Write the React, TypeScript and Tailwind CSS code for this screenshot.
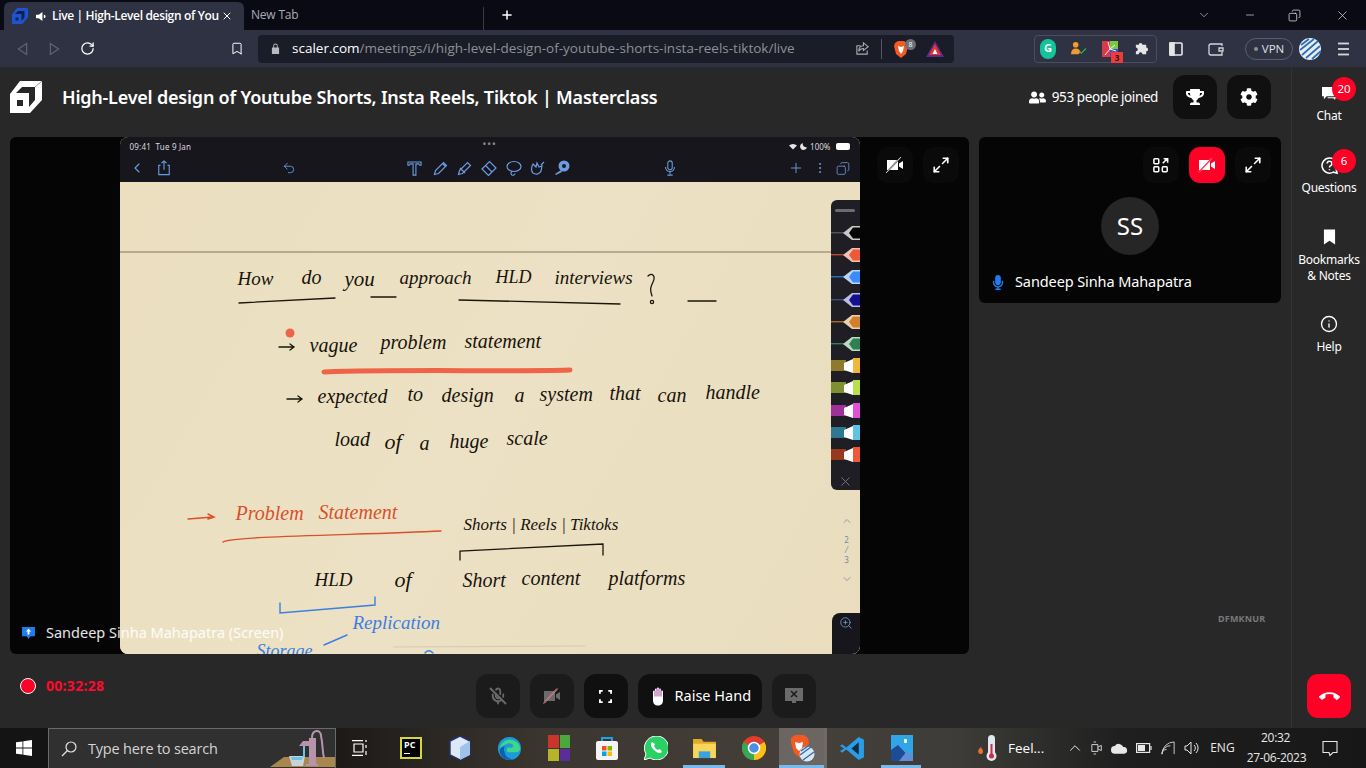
import {
  Bookmark,
  ChevronDown,
  ChevronLeft,
  ChevronUp,
  Copy,
  EllipsisVertical,
  Info,
  Maximize2,
  MicOff,
  Minus,
  Plus,
  RotateCw,
  Undo2,
  X,
  ZoomIn,
} from 'lucide-react'
import { FaCog, FaMicrophone, FaTrophy, FaUserFriends } from 'react-icons/fa'
import { MdCallEnd } from 'react-icons/md'

const sans = "font-['Noto_Sans',sans-serif]"

function VideoOff({ className = 'w-5 h-5', fill = '#fff', line = '#fff' }: { className?: string; fill?: string; line?: string }) {
  return (
    <svg viewBox="0 0 20 20" className={className}>
      <path d="M2 5h11v10H2zM14 8.500l4-2.500v8l-4-2.500z" fill={fill} />
      <path d="M2 17L15 3" stroke={line === '#fff' ? '#333' : '#ff7f92'} strokeWidth="1.600" />
      <path d="M1 18L16 2" stroke={line} strokeWidth="0.800" />
    </svg>
  )
}

function TileBtn({ children, className = 'bg-[#0a0a0a]' }: { children: React.ReactNode; className?: string }) {
  return <div className={`w-9 h-9 rounded-[11px] flex items-center justify-center ${className}`}>{children}</div>
}

function LogoMark({ className = 'w-8 h-8', front = '#fff', hole = '#282828' }: { className?: string; front?: string; hole?: string }) {
  return (
    <svg viewBox="0 0 32 32" className={className}>
      <path d="M0 13L10 0h22v19L20 32H0z" fill={front} />
      <path d="M6 12l6-6h13v13l-6 7V12z" fill={hole} />
      <path d="M7 19h6v6H7z" fill={hole} />
      <path d="M32 0l-7 6" stroke={hole} strokeWidth="0.800" opacity="0.6" />
    </svg>
  )
}

const handwriting = [
  { t: 'How', c: 'left-[118px] top-[87px] w-[40px] text-[19px]' },
  { t: 'do', c: 'left-[182px] top-[85px] w-[26px] text-[20px]' },
  { t: 'you', c: 'left-[225px] top-[87px] w-[32px] text-[21px]' },
  { t: 'approach', c: 'left-[280px] top-[86px] w-[72px] text-[19px]' },
  { t: 'HLD', c: 'left-[376px] top-[86px] w-[38px] text-[18px]' },
  { t: 'interviews', c: 'left-[435px] top-[86px] w-[86px] text-[19px]' },
  { t: 'vague', c: 'left-[190px] top-[153px] w-[50px] text-[20px]' },
  { t: 'problem', c: 'left-[261px] top-[150px] w-[64px] text-[20px]' },
  { t: 'statement', c: 'left-[345px] top-[149px] w-[92px] text-[20px]' },
  { t: 'expected', c: 'left-[198px] top-[204px] w-[72px] text-[20px]' },
  { t: 'to', c: 'left-[288px] top-[202px] w-[16px] text-[20px]' },
  { t: 'design', c: 'left-[322px] top-[203px] w-[56px] text-[20px]' },
  { t: 'a', c: 'left-[395px] top-[203px] w-[10px] text-[20px]' },
  { t: 'system', c: 'left-[420px] top-[202px] w-[58px] text-[20px]' },
  { t: 'that', c: 'left-[490px] top-[201px] w-[34px] text-[20px]' },
  { t: 'can', c: 'left-[538px] top-[203px] w-[36px] text-[20px]' },
  { t: 'handle', c: 'left-[586px] top-[200px] w-[55px] text-[20px]' },
  { t: 'load', c: 'left-[215px] top-[247px] w-[35px] text-[20px]' },
  { t: 'of', c: 'left-[265px] top-[249px] w-[22px] text-[22px]' },
  { t: 'a', c: 'left-[300px] top-[251px] w-[10px] text-[20px]' },
  { t: 'huge', c: 'left-[330px] top-[249px] w-[35px] text-[20px]' },
  { t: 'scale', c: 'left-[387px] top-[246px] w-[41px] text-[20px]' },
  { t: 'Problem', c: 'left-[116px] top-[321px] w-[64px] text-[20px] text-[#d8502c]' },
  { t: 'Statement', c: 'left-[199px] top-[320px] w-[92px] text-[20px] text-[#d8502c]' },
  { t: 'Shorts | Reels | Tiktoks', c: 'left-[344px] top-[334px] w-[156px] text-[17px]' },
  { t: 'HLD', c: 'left-[195px] top-[388px] w-[44px] text-[19px]' },
  { t: 'of', c: 'left-[275px] top-[387px] w-[22px] text-[22px]' },
  { t: 'Short', c: 'left-[343px] top-[388px] w-[48px] text-[20px]' },
  { t: 'content', c: 'left-[402px] top-[386px] w-[64px] text-[20px]' },
  { t: 'platforms', c: 'left-[489px] top-[386px] w-[74px] text-[20px]' },
  { t: 'Replication', c: 'left-[233px] top-[431px] w-[88px] text-[19px] text-[#3b7fdf]' },
  { t: 'Storage', c: 'left-[137px] top-[460px] w-[54px] text-[18px] text-[#3b7fdf]' },
]

const pens = [
  { stem: '#55545a', tip: '#c9c9c9', body: '#050505', hi: false },
  { stem: '#b94a30', tip: '#eec3b4', body: '#ef5a36', hi: false },
  { stem: '#2f6fc0', tip: '#b9d4f5', body: '#3d8bfa', hi: false },
  { stem: '#4a4880', tip: '#bcbde0', body: '#14108c', hi: false },
  { stem: '#a86c2b', tip: '#ecd1b0', body: '#d07f2c', hi: false },
  { stem: '#3c7a5a', tip: '#bcd9c6', body: '#2f8050', hi: false },
  { stem: '#8d7a2c', tip: '#fff', body: '#efb83a', hi: true },
  { stem: '#7e9030', tip: '#fff', body: '#b9df4c', hi: true },
  { stem: '#a0309a', tip: '#fff', body: '#e24fd8', hi: true },
  { stem: '#2f7892', tip: '#fff', body: '#5fc3e6', hi: true },
  { stem: '#96391f', tip: '#fff', body: '#ee5a36', hi: true },
]

function Pen({ stem, tip, body, hi }: { stem: string; tip: string; body: string; hi: boolean }) {
  return (
    <svg viewBox="0 0 29 22.2" className="w-[29px] h-[22.2px] shrink-0">
      {hi ? (
        <>
          <rect x="0" y="5" width="15" height="11" fill={stem} />
          <path d="M13 8l9-4v14l-9-3z" fill={tip} />
          <rect x="22" y="3" width="7" height="15" fill={body} />
        </>
      ) : (
        <>
          <rect x="0" y="10" width="13" height="1.400" fill={stem} />
          <path d="M12 11l9-7h8v14h-8z" fill={tip} />
          <path d="M18 11l4-5.500h7v11h-7z" fill={body} />
        </>
      )}
    </svg>
  )
}

function NotebookApp() {
  return (
    <div className="relative w-[740px] h-full rounded-[8px] overflow-hidden bg-[#ebdfc1] font-['Liberation_Serif',serif]">
      {/* ipad status + toolbar */}
      <div className="h-[45px] bg-[#17161c] text-[#d9d9de] relative">
        <div className={`flex items-center justify-between h-[16px] pl-[10px] pr-[10px] pt-[3px] text-[8px] ${sans}`}>
          <span className="tracking-[0.2px]">09:41 &nbsp;Tue 9 Jan</span>
          <span className="absolute left-[363px] top-0 text-[10px] tracking-[1px] text-[#8b8b90]">•••</span>
          <span className="flex items-center gap-[3px]">
            <svg viewBox="0 0 12 9" className="w-[8px] h-[7px]"><path d="M0 3a9 9 0 0 1 12 0l-6 6z" fill="#e5e5e5" /></svg>
            <svg viewBox="0 0 10 10" className="w-[7px] h-[7px]"><path d="M4 0a5 5 0 1 0 6 6A5 5 0 0 1 4 0z" fill="#e5e5e5" /></svg>
            100%
            <span className="w-[14px] h-[7px] rounded-[2px] bg-white ml-[2px]" />
          </span>
        </div>
        <div className="absolute left-0 right-0 top-[19px] h-[24px] flex items-center text-[#6a9be0]">
          <ChevronLeft className="absolute left-[9px] w-[16px] h-[16px]" strokeWidth={1.6} />
          <svg viewBox="0 0 16 18" className="absolute left-[37px] w-[14px] h-[16px]" fill="none" stroke="currentColor" strokeWidth="1.300"><path d="M4 6H2v10.500h12V6h-2M8 11V1M5 3.500L8 1l3 2.500" /></svg>
          <Undo2 className="absolute left-[162px] w-[14px] h-[14px]" strokeWidth={1.5} />
          <svg viewBox="0 0 16 16" className="absolute left-[287px] w-[15px] h-[15px]" fill="none" stroke="currentColor" strokeWidth="1.200"><path d="M1 1h14v3.500h-1.500L12.500 3H9.500v12h-3V3H3.500L2.500 4.500H1z" /></svg>
          <svg viewBox="0 0 16 16" className="absolute left-[313px] w-[16px] h-[16px]" fill="none" stroke="currentColor" strokeWidth="1.200"><path d="M1.500 14.500l1-4L10.500 2.500l3 3-8 8zM9.500 3.500l3 3" /></svg>
          <svg viewBox="0 0 16 16" className="absolute left-[337px] w-[16px] h-[16px]" fill="none" stroke="currentColor" strokeWidth="1.200"><path d="M1.500 14.500l1-4L10.500 2.500l3 3-8 8zM3 8l5 5" /></svg>
          <svg viewBox="0 0 16 16" className="absolute left-[361px] w-[16px] h-[16px]" fill="none" stroke="currentColor" strokeWidth="1.200"><path d="M1 9l7.500-7.500L15 8l-7.500 7.500zM4.500 5.500L11 12" /></svg>
          <svg viewBox="0 0 16 16" className="absolute left-[386px] w-[16px] h-[16px]" fill="none" stroke="currentColor" strokeWidth="1.200"><ellipse cx="8" cy="6.500" rx="7" ry="5" /><path d="M6 11.500a2 2 0 1 0 3 2" /></svg>
          <svg viewBox="0 0 16 16" className="absolute left-[410px] w-[16px] h-[16px]" fill="none" stroke="currentColor" strokeWidth="1.200"><path d="M3 4c-2 3-2 7 0 9 3 2 7 1 8-2l1-5-3 1-2-4-1 4zM11 5l3-3" /></svg>
          <svg viewBox="0 0 16 16" className="absolute left-[434px] w-[16px] h-[16px]" fill="currentColor"><circle cx="10" cy="6" r="5.500" /><path d="M7 10l-6 4 1 1 6-3z" /><circle cx="10" cy="6" r="2" fill="#17161c" /></svg>
          <svg viewBox="0 0 12 18" className="absolute left-[544px] w-[12px] h-[16px]" fill="none" stroke="currentColor" strokeWidth="1.200"><rect x="3.500" y="1" width="5" height="10" rx="2.500" /><path d="M1 8a5 5 0 0 0 10 0M6 13v3M3 17h6" /></svg>
          <Plus className="absolute left-[668px] w-[16px] h-[16px]" strokeWidth={1.4} />
          <EllipsisVertical className="absolute left-[693px] w-[14px] h-[14px]" strokeWidth={1.6} />
          <Copy className="absolute left-[716px] w-[14px] h-[15px] -scale-x-100" strokeWidth={1.4} />
        </div>
      </div>

      {/* paper */}
      <div className="relative h-[472px] overflow-hidden bg-[linear-gradient(120deg,#ebdfc0,#ece1c4_50%,#e9ddbe)]">
        <div className="absolute left-0 right-0 top-[69px] h-[2px] bg-[#b8aa90]" />
        {handwriting.map((w, i) => (
          <span key={i} className={`absolute italic leading-none whitespace-nowrap ${w.c.includes('text-[#') ? '' : 'text-[#17130c]'} ${w.c}`}>
            {w.t}
          </span>
        ))}
        <svg viewBox="0 0 740 472" className="absolute inset-0 w-[740px] h-[472px]" fill="none" strokeLinecap="round">
          <g stroke="#1a160e" strokeWidth="1.300">
            <path d="M119 121L215 116M251 115H276M339 118L500 122M568 119H596" />
            <path d="M528 94c4-4 8 0 5 6s-3 8-1 14" />
            <circle cx="532" cy="120" r="1.600" />
            <path d="M159 165H174M170 162l4 3-4 3" />
            <path d="M167 217H182M178 214l4 3-4 3" />
            <path d="M340 378L340 369L483 362L483 373" />
          </g>
          <circle cx="170" cy="151" r="4.500" fill="#ef6448" />
          <path d="M204 190C290 187 380 190 450 188" stroke="#ef6448" strokeWidth="5" />
          <g stroke="#d8502c" strokeWidth="1.400">
            <path d="M68 337L93 335M88 332l6 3-6 2" />
            <path d="M103 360C110 354 240 353 321 349" />
          </g>
          <g stroke="#3b7fdf" strokeWidth="1.400">
            <path d="M160 421V431L255 423V415" />
            <path d="M204 463L227 453" />
            <path d="M305 471c2-3 5-3 8 0" />
          </g>
          <path d="M274 465L465 464" stroke="#d6cbb2" strokeWidth="1.200" />
        </svg>

        {/* pen strip */}
        <div className="absolute right-0 top-[18px] w-[29px] h-[290px] rounded-l-[6px] bg-[#1f1e25] flex flex-col items-center overflow-hidden">
          <div className="w-[20px] h-[3px] mt-[9px] mb-[10px] rounded bg-[#6c6b72]" />
          {pens.map((p, i) => (
            <Pen key={i} {...p} />
          ))}
          <X className="w-[15px] h-[15px] mt-[8px] text-[#77767c]" strokeWidth={1.5} />
        </div>

        <div className={`absolute right-[7px] top-[333px] flex flex-col items-center text-[#6f8aa6] text-[8px] leading-[10px] ${sans}`}>
          <ChevronUp className="w-[12px] h-[12px] mb-[8px]" strokeWidth={1.5} />
          <span>2</span>
          <span>⁄</span>
          <span>3</span>
          <ChevronDown className="w-[12px] h-[12px] mt-[8px]" strokeWidth={1.5} />
        </div>

        <div className="absolute right-0 bottom-0 w-[28px] h-[41px] rounded-tl-[8px] bg-[#17161c] flex justify-center pt-[3px]">
          <ZoomIn className="w-[14px] h-[14px] text-[#7ba0cf]" strokeWidth={1.4} />
        </div>
      </div>
    </div>
  )
}

function ChromeBar() {
  return (
    <div className="font-['Open_Sans',sans-serif]">
      <div className="h-[30px] bg-[#0a0a15] flex items-end pl-[4px] text-[12px]">
        <div className="w-[240px] h-[28px] rounded-t-[6px] bg-[#2f3242] flex items-center pl-[8px] pr-[6px] text-white">
          <LogoMark className="w-[16px] h-[16px]" front="#1f54cf" hole="#10204f" />
          <svg viewBox="0 0 12 12" className="w-[11px] h-[11px] ml-[8px]" fill="#fff"><path d="M0 4h3l4-3v10L3 8H0zM8.500 4v4a2 2 0 0 0 0-4z" /></svg>
          <span className="ml-[5px] w-[168px] overflow-hidden whitespace-nowrap font-semibold tracking-[-0.35px]">Live | High-Level design of You</span>
          <X className="w-[12px] h-[12px] ml-auto mr-[5px]" strokeWidth={2} />
        </div>
        <span className="ml-[7px] mb-[6px] text-[#a9abb3] tracking-[-0.2px]">New Tab</span>
        <div className="ml-[185px] w-px h-[23px] bg-[#3a3b42] mb-0" />
        <Plus className="ml-[16px] mb-[8px] w-[14px] h-[14px] text-white" strokeWidth={2.6} />
        <div className="ml-auto flex items-center h-[30px] text-[#d5d5d8]">
          <ChevronDown className="w-[14px] h-[14px] mr-[33px]" strokeWidth={1.1} />
          <Minus className="w-[12px] h-[12px] mr-[32px]" strokeWidth={1.4} />
          <Copy className="w-[13px] h-[13px] mr-[34px] -scale-x-100" strokeWidth={1.5} />
          <X className="w-[15px] h-[15px] mr-[16px]" strokeWidth={1.2} />
        </div>
      </div>
      <div className="h-[37px] bg-[#2f3242] flex items-center text-[#d5d6db]">
        <svg viewBox="0 0 12 14" className="ml-[17px] w-[11px] h-[14px]" fill="none" stroke="#62646f" strokeWidth="1.300"><path d="M10.500 1L1.500 7l9 6z" /></svg>
        <svg viewBox="0 0 12 14" className="ml-[21px] w-[11px] h-[14px]" fill="none" stroke="#62646f" strokeWidth="1.300"><path d="M1.500 1l9 6-9 6z" /></svg>
        <RotateCw className="ml-[20px] w-[15px] h-[15px] text-white" strokeWidth={2} />
        <Bookmark className="ml-[135px] w-[14px] h-[15px] text-white" strokeWidth={1.7} />
        <div className="ml-[14px] w-[696px] h-[28px] rounded-[4px] bg-[#1a1c27] flex items-center">
          <svg viewBox="0 0 10 12" className="ml-[13px] w-[9px] h-[11px]" fill="#b9bac0"><path d="M1 5h8v7H1zM2.500 5V3a2.500 2.500 0 0 1 5 0v2h-1V3a1.500 1.500 0 0 0-3 0v2z" /></svg>
          <span className="ml-[12px] text-[13.500px] text-[#8e9097] whitespace-nowrap">
            <span className="text-white">scaler.com</span>/meetings/i/high-level-design-of-youtube-shorts-insta-reels-tiktok/live
          </span>
          <svg viewBox="0 0 16 16" className="ml-auto w-[15px] h-[15px]" fill="none" stroke="#a9aab0" strokeWidth="1.200"><path d="M13 10v4H2V5h4M9 2l5 4-5 4V8c-3 0-4 1-5 3 0-4 2-6 5-6z" /></svg>
          <div className="ml-[11px] w-px h-[20px] bg-[#55565e]" />
          <div className="relative ml-[11px] w-[16px] h-[18px]">
            <svg viewBox="0 0 16 18" className="w-[16px] h-[18px]"><path d="M2 3l3-2h6l3 2 1 3-2 8-5 4-5-4-2-8z" fill="#f15a22" /><path d="M5 6l3 1 3-1-1 5-2 3-2-3z" fill="#fff" /></svg>
            <span className="absolute -right-[7px] -top-[1px] w-[11px] h-[11px] rounded-full bg-[#6d6e75] text-white text-[7px] leading-[11px] text-center">8</span>
          </div>
          <svg viewBox="0 0 18 18" className="ml-[17px] mr-[10px] w-[18px] h-[18px]"><path d="M9 1l9 16H0z" fill="#5e2a8c" /><path d="M9 4l6 11H3z" fill="#e8352c" /><path d="M9 9l2.500 5h-5z" fill="#fff" /></svg>
        </div>
        <div className="ml-[80px] w-[123px] h-[28px] rounded-[4px] border border-[#4a4d5c] flex items-center">
          <span className="ml-[5px] w-[16px] h-[20px] rounded-full bg-[#15c39a] flex items-center justify-center text-[11px] font-bold text-white">G</span>
          <svg viewBox="0 0 18 16" className="ml-[14px] w-[17px] h-[15px]"><circle cx="6" cy="4" r="3" fill="#f39c2d" /><path d="M1 14c0-4 2-6 5-6s5 2 5 4l-2 2z" fill="#f39c2d" /><path d="M10 11l2 2 5-5" stroke="#34a853" strokeWidth="1.300" fill="none" /></svg>
          <div className="relative ml-[15px] w-[16px] h-[16px] bg-[linear-gradient(90deg,#d93a4a_50%,#4b4fc4_50%)]">
            <span className="absolute right-0 top-0 w-[8px] h-[8px] bg-[#7ac943]" />
            <svg viewBox="0 0 16 16" className="absolute inset-0 w-[16px] h-[16px]" stroke="#fff" strokeWidth="0.900"><path d="M8 8L3 14M8 8L6 1M8 8l5-4M8 8l6 2" /></svg>
            <span className="absolute -right-[5px] -bottom-[6px] w-[12px] h-[11px] bg-[#ee3a3a] text-[#1a1a1a] text-[8px] leading-[11px] text-center font-bold">3</span>
          </div>
          <svg viewBox="0 0 16 16" className="ml-[16px] w-[15px] h-[15px]" fill="#e6e6e8"><path d="M2 4h3a2 2 0 1 1 4 0h4v3a2 2 0 1 1 0 4v3H9a2 2 0 1 0-4 0H2v-3a2 2 0 1 0 0-4z" /></svg>
        </div>
        <svg viewBox="0 0 14 14" className="ml-[12px] w-[14px] h-[14px]" fill="none" stroke="#e6e6e8" strokeWidth="1.600"><rect x="1" y="1" width="12" height="12" rx="1" /><rect x="1" y="1" width="4" height="12" fill="#e6e6e8" /></svg>
        <svg viewBox="0 0 16 14" className="ml-[25px] w-[16px] h-[14px]" fill="none" stroke="#d5d6db" strokeWidth="1.300"><path d="M14 4V2H3a2 2 0 0 0-2 2v7a2 2 0 0 0 2 2h11V10M15 6h-4v3h4z" /></svg>
        <div className="ml-[21px] w-[48px] h-[22px] rounded-full border border-[#5a5d6b] flex items-center justify-center gap-[4px] text-[11.500px] text-[#dfe0e4]">
          <span className="w-[4px] h-[4px] rounded-full bg-[#8d8f99]" />
          VPN
        </div>
        <svg viewBox="0 0 22 22" className="ml-[6px] w-[22px] h-[22px]">
          <circle cx="11" cy="11" r="11" fill="#e8eef4" />
          <path d="M2 7L10 1M1 12L15 1M3 17L19 3M7 20L21 8M13 21L22 13" stroke="#2d6fb5" strokeWidth="1.800" />
        </svg>
        <svg viewBox="0 0 12 14" className="ml-[17px] w-[11px] h-[14px]" fill="#d5d6db"><rect width="12" height="2" /><rect y="6" width="12" height="2" /><rect y="12" width="12" height="2" /></svg>
      </div>
    </div>
  )
}

function SideItem({ icon, label, badge, className = '' }: { icon: React.ReactNode; label: React.ReactNode; badge?: string; className?: string }) {
  return (
    <div className={`relative flex flex-col items-center text-[12px] leading-[16px] text-white text-center tracking-[-0.25px] ${className}`}>
      <div className="h-[22px] flex items-center justify-center">{icon}</div>
      <div className="mt-[4px]">{label}</div>
      {badge && (
        <span className="absolute left-[40px] -top-[5px] w-[24px] h-[24px] rounded-full bg-[#ff0026] text-[11.500px] leading-[24px] tracking-normal">{badge}</span>
      )}
    </div>
  )
}

function Sidebar() {
  return (
    <div className={`w-[75px] shrink-0 border-l border-[#333] bg-[#282828] flex flex-col items-center ${sans}`}>
      <div className="pt-[15px] w-full">
        <SideItem
          icon={<svg viewBox="0 0 18 16" className="w-[17px] h-[15px]" fill="#fff"><path d="M1 1h13v10H6l-3 3v-3H1z" /><path d="M15 4h2v9h-2v2l-2-2H7v-1h8z" /></svg>}
          label="Chat"
          badge="20"
        />
        <SideItem
          className="mt-[30px]"
          icon={
            <svg viewBox="0 0 20 20" className="w-[19px] h-[19px]" fill="none" stroke="#fff" strokeWidth="1.600"><path d="M10 2a8 8 0 1 0 4 15l4 1-1-4a8 8 0 0 0-7-12z" /><path d="M7.500 8a2.500 2.500 0 1 1 3.500 2.300c-.7.300-1 .8-1 1.700M10 14v1" /></svg>
          }
          label="Questions"
          badge="6"
        />
        <SideItem
          className="mt-[30px]"
          icon={<svg viewBox="0 0 14 16" className="w-[13px] h-[16px]" fill="#fff"><path d="M1 0h12v16l-6-4-6 4z" /></svg>}
          label={<>Bookmarks<br />&amp; Notes</>}
        />
        <SideItem className="mt-[29px]" icon={<Info className="w-[18px] h-[18px]" strokeWidth={1.800} />} label="Help" />
      </div>
      <div className="mt-auto mb-[10px] w-[44px] h-[44px] rounded-[11px] bg-[#ff0026] flex items-center justify-center">
        <MdCallEnd className="w-[21px] h-[21px] text-white" />
      </div>
    </div>
  )
}

function Stage() {
  return (
    <div className={`flex gap-[10px] px-[10px] h-[517px] mt-[10px] ${sans}`}>
      <div className="relative w-[959px] h-[517px] rounded-[6px] bg-[#050505] flex justify-center">
        <NotebookApp />
        <div className="absolute right-[10px] top-[10px] flex gap-[10px]">
          <TileBtn><VideoOff /></TileBtn>
          <TileBtn><Maximize2 className="w-[18px] h-[18px] text-white" strokeWidth={2.200} /></TileBtn>
        </div>
        <div className="absolute left-[12px] bottom-[10px] flex items-center text-[14.500px] text-white/90">
          <svg viewBox="0 0 14 13" className="w-[13px] h-[12px]"><path d="M0 0h14v10H9l-2 3-2-3H0z" fill="#1f7cf0" /><path d="M7 2l3 3H8v3H6V5H4z" fill="#fff" /></svg>
          <span className="ml-[11px]">Sandeep Sinha Mahapatra (Screen)</span>
        </div>
      </div>

      <div className="relative w-[302px] h-[517px]">
        <div className="relative h-[166px] rounded-[6px] bg-[#050505]">
          <div className="absolute right-[10px] top-[10px] flex gap-[10px]">
            <TileBtn>
              <svg viewBox="0 0 18 18" className="w-[16px] h-[16px]" fill="none" stroke="#fff" strokeWidth="1.700"><rect x="1" y="2" width="5.500" height="5.500" rx="1" /><rect x="1" y="11" width="5.500" height="5.500" rx="1" /><rect x="10.500" y="11" width="5.500" height="5.500" rx="1" /><path d="M11 7l5-5M12 2h4.500v4.500" /></svg>
            </TileBtn>
            <TileBtn className="bg-[#ff0026]"><VideoOff line="#ff0026" /></TileBtn>
            <TileBtn><Maximize2 className="w-[18px] h-[18px] text-white" strokeWidth={2.200} /></TileBtn>
          </div>
          <div className="absolute left-[122px] top-[60px] w-[58px] h-[58px] rounded-full bg-[#262626] flex items-center justify-center text-[24px] text-white">SS</div>
          <div className="absolute left-[13px] bottom-[10px] flex items-center text-[14.500px] text-white tracking-[-0.1px]">
            <FaMicrophone className="w-[12px] h-[15px] text-[#1f7cf0]" />
            <span className="ml-[11px]">Sandeep Sinha Mahapatra</span>
          </div>
        </div>
        <span className="absolute left-[239px] top-[475px] text-[9px] font-bold text-[#77787a] tracking-[0.2px]">DFMKNUR</span>
      </div>
    </div>
  )
}

function Controls() {
  return (
    <div className={`flex-1 grid grid-cols-[1fr_auto_1fr] items-start pt-[20px] ${sans}`}>
      <div className="flex items-center pl-[20px] pt-[1px]">
        <span className="w-[16px] h-[16px] rounded-full bg-[#ff0026] border border-white" />
        <span className="ml-[10px] text-[14px] font-bold text-[#ff0a2e] tracking-[0.3px]">00:32:28</span>
      </div>
      <div className="flex gap-[10px]">
        <div className="w-[44px] h-[44px] rounded-[12px] bg-[#1b1b1b] flex items-center justify-center">
          <MicOff className="w-[18px] h-[18px] text-[#6b6b6b]" strokeWidth={2.400} />
        </div>
        <div className="w-[44px] h-[44px] rounded-[12px] bg-[#1b1b1b] flex items-center justify-center">
          <VideoOff fill="#6b6b6b" line="#6b6b6b" />
        </div>
        <div className="w-[44px] h-[44px] rounded-[12px] bg-[#101010] flex items-center justify-center">
          <svg viewBox="0 0 14 14" className="w-[13px] h-[13px]" fill="none" stroke="#fff" strokeWidth="2"><path d="M1 4V1h3M10 1h3v3M13 10v3h-3M4 13H1v-3" /></svg>
        </div>
        <div className="w-[124px] h-[44px] rounded-[12px] bg-[#101010] flex items-center text-[14.500px] text-white">
          <svg viewBox="0 0 16 20" className="ml-[13px] w-[16px] h-[21px]" fill="#fff"><path d="M2 5a1 1 0 0 1 2 0V3a1 1 0 0 1 2 0V2a1 1 0 0 1 2 0v1a1 1 0 0 1 2 0v2a1 1 0 0 1 2 0v9c0 3-2 5-5 5s-5-2-5-5z" /><path d="M4 4v6M6 2v8M8 2v8M10 3v7" stroke="#8a1f90" strokeWidth="0.800" /></svg>
          <span className="ml-[8px]">Raise Hand</span>
        </div>
        <div className="w-[44px] h-[44px] rounded-[12px] bg-[#1b1b1b] flex items-center justify-center">
          <svg viewBox="0 0 18 18" className="w-[18px] h-[18px]"><path d="M0 1h18v13h-7v2H7v-2H0z" fill="#6b6b6b" /><path d="M6 4l6 6M12 4l-6 6" stroke="#1b1b1b" strokeWidth="1.500" /></svg>
        </div>
      </div>
      <div />
    </div>
  )
}

function Taskbar() {
  return (
    <div className="h-[40px] flex items-stretch text-white bg-[linear-gradient(90deg,#141414_0%,#1d1a18_25%,#3c3630_40%,#45403a_60%,#3d3c38_70%,#1f1f1f_82%,#171717_100%)] font-['Open_Sans',sans-serif] overflow-hidden">
      <div className="w-[48px] flex items-center justify-center">
        <svg viewBox="0 0 16 16" className="w-[16px] h-[16px]" fill="#fff"><path d="M0 2.300l6.500-.9v6.200H0zM7.300 1.300L16 0v7.600H7.300zM0 8.400h6.500v6.200L0 13.700zM7.300 8.400H16V16l-8.700-1.200z" /></svg>
      </div>
      <div className="relative w-[288px] bg-[#303030] border border-[#6a6a6a] border-b-0 flex items-center text-[14.500px] text-[#d4d4d4] overflow-hidden">
        <svg viewBox="0 0 16 16" className="ml-[12px] w-[16px] h-[16px]" fill="none" stroke="#e5e5e5" strokeWidth="1.200"><circle cx="10" cy="6" r="5" /><path d="M6.500 9.500L1 15" /></svg>
        <span className="ml-[11px] tracking-[-0.2px]">Type here to search</span>
        <svg viewBox="0 0 80 40" className="absolute right-0 bottom-0 w-[80px] h-[40px]">
          <path d="M15 39l14-10h52v10z" fill="#a8864d" />
          <path d="M34 28h16l-2 10H37z" fill="#c9d4d8" />
          <path d="M36 29h12l-1 3H37z" fill="#6bc4e4" />
          <path d="M49 29V16" stroke="#6bc4e4" strokeWidth="2" />
          <path d="M44 18h14v-5h-10z" fill="#b794ac" />
          <path d="M54 36V10h7v26z" fill="#b794ac" />
          <path d="M57 10c0-9 9-9 9-2 2 8 1 14 3 22" stroke="#b794ac" strokeWidth="2" fill="none" />
          <path d="M51 36h12v2H51z" fill="#b794ac" />
        </svg>
      </div>
      <div className="relative flex-1">
        <div className="absolute inset-0 flex items-center">
          <svg viewBox="0 0 16 16" className="ml-[16px] w-[16px] h-[16px]" fill="none" stroke="#fff" strokeWidth="1.200"><path d="M0 .6h11M2 4h9v8H2zM0 15.400h11M14 0v2M14 5v3M14 11v4" /></svg>
          {/* PyCharm */}
          <div className="ml-[32px] w-[22px] h-[22px] bg-black border-2 border-[#d5d83a] text-[9px] leading-[10px] font-bold pl-[2px] pt-[1px]">PC<div className="w-[6px] h-[1px] mt-[3px] bg-white" /></div>
          <svg viewBox="0 0 22 26" className="ml-[27px] w-[22px] h-[26px]"><path d="M11 1l10 5v14l-10 5L1 20V6z" fill="#dce9f7" stroke="#26336b" strokeWidth="1.400" /><path d="M11 12L21 6v14l-10 5z" fill="#9fc3ea" /></svg>
          <svg viewBox="0 0 26 26" className="ml-[26px] w-[25px] h-[25px]"><circle cx="13" cy="13" r="12" fill="#1c9bd8" /><path d="M3 14c0-6 5-10 10-10 6 0 11 4 11 9 0 3-3 4-5 4h-6c-2 0-3-1-3-3 0-1 1-2 2-2 2 0 5 1 5-2-1-2-4-3-6-2-4 1-7 3-8 6z" fill="#3fd68a" /><path d="M8 17c0 4 4 7 9 7l-3 1C7 25 2 20 3 14c1-2 3-3 5-3-1 2-1 4 0 6z" fill="#0e5fb0" /></svg>
          <div className="ml-[26px] w-[22px] h-[26px] grid grid-cols-2 grid-rows-2 gap-[1px]">
            <span className="bg-[#c7352b]" /><span className="bg-[#4aa83c]" /><span className="bg-[#b8b42a]" /><span className="bg-[#5a2d9c]" />
          </div>
          <svg viewBox="0 0 24 26" className="ml-[25px] w-[24px] h-[26px]"><path d="M7 7V3h10v4" fill="none" stroke="#1ea1e8" strokeWidth="2" /><rect x="1" y="6" width="22" height="19" rx="2" fill="#f4f4f4" /><rect x="7" y="11" width="4.500" height="4.500" fill="#f25022" /><rect x="12.500" y="11" width="4.500" height="4.500" fill="#7fba00" /><rect x="7" y="16.500" width="4.500" height="4.500" fill="#00a4ef" /><rect x="12.500" y="16.500" width="4.500" height="4.500" fill="#ffb900" /></svg>
          <svg viewBox="0 0 24 24" className="ml-[25px] w-[24px] h-[24px]"><path d="M12 0a12 12 0 0 0-10 18L0 24l6-2a12 12 0 1 0 6-22z" fill="#2bd064" stroke="#fff" strokeWidth="1" /><path d="M8 6c-2 2-1 5 2 8s6 4 8 2l-2-3-2 1c-2-1-3-2-4-4l1-2z" fill="#fff" /></svg>
          <svg viewBox="0 0 24 22" className="ml-[25px] w-[23px] h-[21px]"><path d="M0 1h9l2 3h13v6H0z" fill="#e3aa2a" /><rect y="6" width="24" height="15" fill="#f9d55a" /><rect x="6" y="14" width="12" height="7" fill="#3ba2e0" /></svg>
          <svg viewBox="0 0 24 24" className="ml-[26px] w-[24px] h-[24px]"><circle cx="12" cy="12" r="12" fill="#e33b2e" /><path d="M12 12L22.400 6A12 12 0 0 1 12 24z" fill="#fbc116" /><path d="M12 12L12 24A12 12 0 0 1 1.600 6z" fill="#34a853" /><circle cx="12" cy="12" r="5.500" fill="#4a90e2" stroke="#fff" strokeWidth="1.500" /></svg>
          <div className="ml-[13px] w-[45px] h-[40px] bg-[#6b6661] flex items-center justify-center relative">
            <svg viewBox="0 0 26 28" className="w-[26px] h-[28px]"><path d="M2 4l4-3h9l4 3 1 5-3 10-6 5-6-5L2 9z" fill="#f15a22" /><path d="M6 8l4 1 4-1-1 6-3 3-3-3z" fill="#fff" /><circle cx="18" cy="20" r="7.500" fill="#dbe7f0" /><path d="M12 17l7-5M11 21l11-8M14 26l11-8" stroke="#2d6fb5" strokeWidth="1.500" /></svg>
            <span className="absolute right-[-3px] top-0 bottom-0 w-[3px] bg-[#6f6a65]" />
          </div>
          <svg viewBox="0 0 24 24" className="ml-[16px] w-[25px] h-[31px]"><path d="M18 1l5 2.500v17L18 23 6 13 2 16l-2-1.500L4 12 0 9.500 2 8l4 3z" fill="#2a9de4" /><path d="M18 6l-7 6 7 6z" fill="#162b44" /></svg>
          <svg viewBox="0 0 22 26" className="ml-[26px] w-[22px] h-[26px]"><rect width="22" height="26" fill="#31a6e6" /><path d="M0 26V15l7-5 15 16z" fill="#1c4c95" /><path d="M8 26l8-10 6 5v5z" fill="#5d8fd6" /><rect x="13" y="4" width="3" height="4" rx="1" fill="#fff" /></svg>
          <div className="ml-[63px] flex items-center">
            <svg viewBox="0 0 24 28" className="w-[24px] h-[28px]"><path d="M3 15c-2 3 0 5 2 5s3-3 1-5l-1-2z" fill="#e8702a" /><rect x="12" y="1" width="7" height="21" rx="3.500" fill="#dfe8f0" /><circle cx="15.500" cy="22" r="5" fill="#dfe8f0" /><circle cx="15.500" cy="22" r="2.500" fill="#d4284a" /><rect x="14.500" y="10" width="2" height="12" fill="#d4284a" /></svg>
            <span className="ml-[8px] text-[13.500px]">Feel...</span>
          </div>
          <div className="ml-[22px] flex items-center text-[#e8e8e8]">
            <ChevronUp className="w-[18px] h-[18px]" strokeWidth={1.300} />
            <svg viewBox="0 0 14 18" className="ml-[7px] w-[12px] h-[18px]" fill="none" stroke="#e8e8e8" strokeWidth="1"><path d="M1 5h7v8H1zM8 8l4-2v6l-4-2M3 2h3M3 16h3" /></svg>
            <svg viewBox="0 0 18 12" className="ml-[8px] w-[17px] h-[12px]" fill="#e8e8e8"><path d="M4 12a4 4 0 0 1 0-8 5 5 0 0 1 9 1 3.500 3.500 0 0 1 1 7z" /></svg>
            <svg viewBox="0 0 16 10" className="ml-[8px] w-[16px] h-[10px]" fill="none" stroke="#e8e8e8" strokeWidth="1.200"><rect x=".6" y=".6" width="13" height="8.800" /><rect x="2" y="2" width="7" height="6" fill="#e8e8e8" stroke="none" /><path d="M15 3v4" /></svg>
            <svg viewBox="0 0 16 16" className="ml-[9px] w-[15px] h-[15px]" fill="none" stroke="#cfcfcf" strokeWidth="1"><path d="M1 14a13 13 0 0 1 13-13M1 14a9 9 0 0 1 9-9M1 14a5 5 0 0 1 5-5M14 1v13" /></svg>
            <svg viewBox="0 0 16 16" className="ml-[8px] w-[16px] h-[16px]" fill="none" stroke="#e8e8e8" strokeWidth="1"><path d="M1 6h2l4-4v12l-4-4H1zM10 5a4 4 0 0 1 0 6M12 3a7 7 0 0 1 0 10" /></svg>
          </div>
          <span className="ml-[10px] text-[12px] text-[#e8e8e8]">ENG</span>
          <div className="ml-[12px] w-[58px] text-center text-[12px] leading-[20px] text-[#e8e8e8] whitespace-nowrap tracking-[-0.3px]">
            <div>20:32</div>
            <div>27-06-2023</div>
          </div>
          <svg viewBox="0 0 16 16" className="ml-[17px] w-[16px] h-[17px]" fill="none" stroke="#e8e8e8" strokeWidth="1.100"><path d="M1 1h14v11H11l-3 3-1-3H1z" /></svg>
        </div>
        <span className="absolute left-[347px] bottom-0 w-[42px] h-[3px] bg-[#76b9ed]" />
        <span className="absolute left-[443px] bottom-0 w-[45px] h-[3px] bg-[#76b9ed]" />
        <span className="absolute left-[545px] bottom-0 w-[40px] h-[3px] bg-[#76b9ed]" />
      </div>
    </div>
  )
}

export default function App() {
  return (
    <div className="w-[1366px] h-[768px] flex flex-col overflow-hidden bg-[#282828]">
      <ChromeBar />
      <div className="flex-1 flex min-h-0">
        <div className="flex-1 flex flex-col min-w-0">
          <div className={`h-[60px] flex items-center pl-[10px] pr-[20px] text-white ${sans}`}>
            <LogoMark />
            <h1 className="ml-[20px] text-[18px] font-semibold tracking-[-0.22px] whitespace-nowrap">High-Level design of Youtube Shorts, Insta Reels, Tiktok | Masterclass</h1>
            <FaUserFriends className="ml-auto w-[17px] h-[17px]" />
            <span className="ml-[6px] text-[13.500px] tracking-[-0.4px]">953 people joined</span>
            <div className="ml-[15px] w-[44px] h-[44px] rounded-[12px] bg-[#101010] flex items-center justify-center">
              <FaTrophy className="w-[18px] h-[18px]" />
            </div>
            <div className="ml-[10px] w-[44px] h-[44px] rounded-[12px] bg-[#101010] flex items-center justify-center">
              <FaCog className="w-[18px] h-[18px]" />
            </div>
          </div>
          <Stage />
          <Controls />
        </div>
        <Sidebar />
      </div>
      <Taskbar />
    </div>
  )
}
